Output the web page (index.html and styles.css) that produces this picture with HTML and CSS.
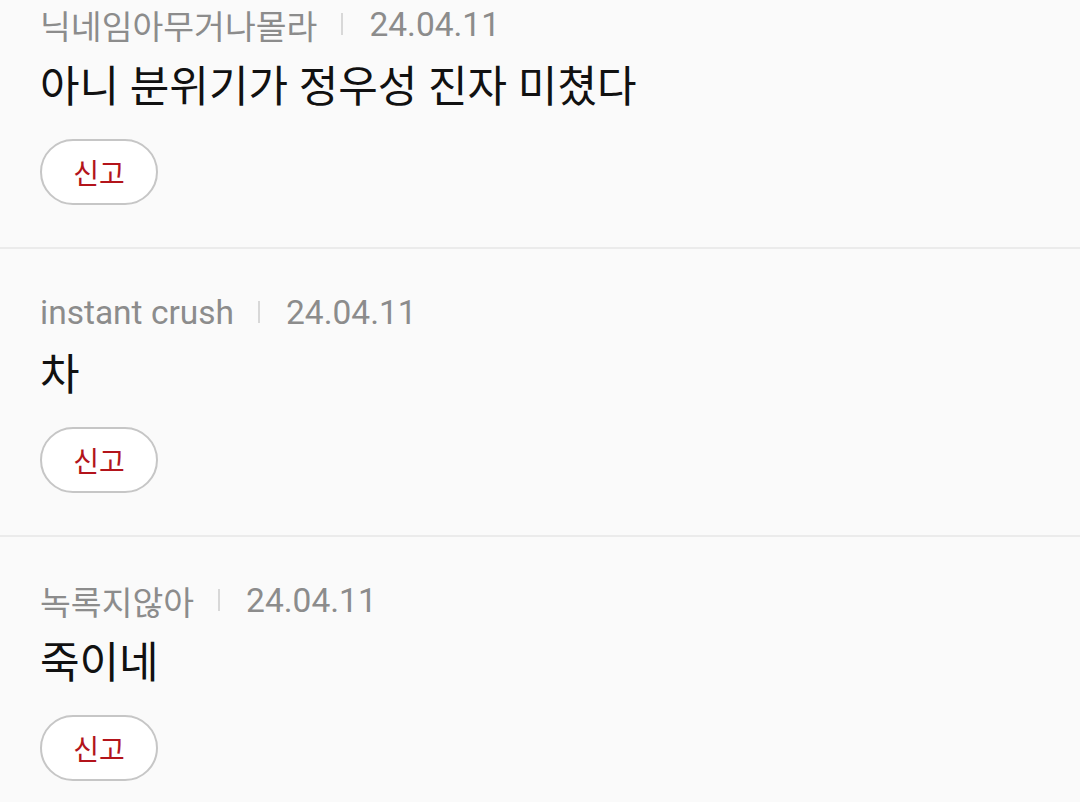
FILE: index.html
```html
<!DOCTYPE html>
<html lang="ko">
<head>
<meta charset="utf-8">
<link rel="stylesheet" href="styles.css">
</head>
<body>
<ul class="list">
  <li class="item">
    <div class="meta"><span class="nick">닉네임아무거나몰라</span><span class="sep"></span><span class="date">24.04.11</span></div>
    <p class="body">아니 분위기가 정우성 진자 미쳤다</p>
    <button class="report">신고</button>
  </li>
  <li class="item">
    <div class="meta"><span class="nick">instant crush</span><span class="sep"></span><span class="date">24.04.11</span></div>
    <p class="body">차</p>
    <button class="report">신고</button>
  </li>
  <li class="item">
    <div class="meta"><span class="nick">녹록지않아</span><span class="sep"></span><span class="date">24.04.11</span></div>
    <p class="body">죽이네</p>
    <button class="report">신고</button>
  </li>
</ul>
</body>
</html>
```
FILE: styles.css
```css
html, body {
  margin: 0;
  padding: 0;
  background: #fafafa;
  font-family: Roboto, "Noto Sans CJK KR", sans-serif;
}
.list {
  list-style: none;
  margin: -39px 0 0;
  padding: 0;
}
.item {
  padding: 43px 40px 42px;
  border-bottom: 2px solid #ebebeb;
}
.meta {
  display: flex;
  align-items: center;
  height: 40px;
  font-size: 33.5px;
  color: #8c8c8c;
}
.sep {
  width: 2px;
  height: 22px;
  background: #d8d8d8;
  margin: 0 26px 0 24px;
}
.body {
  margin: 16px 0 0;
  height: 54px;
  line-height: 54px;
  font-size: 43px;
  color: #111;
}
.report {
  display: block;
  margin-top: 25px;
  width: 118px;
  height: 66px;
  border: 2px solid #c6c6c6;
  border-radius: 33px;
  background: #fff;
  color: #b3141b;
  font-family: "Noto Sans CJK KR", sans-serif;
  font-size: 28px;
  padding: 0;
}
```
